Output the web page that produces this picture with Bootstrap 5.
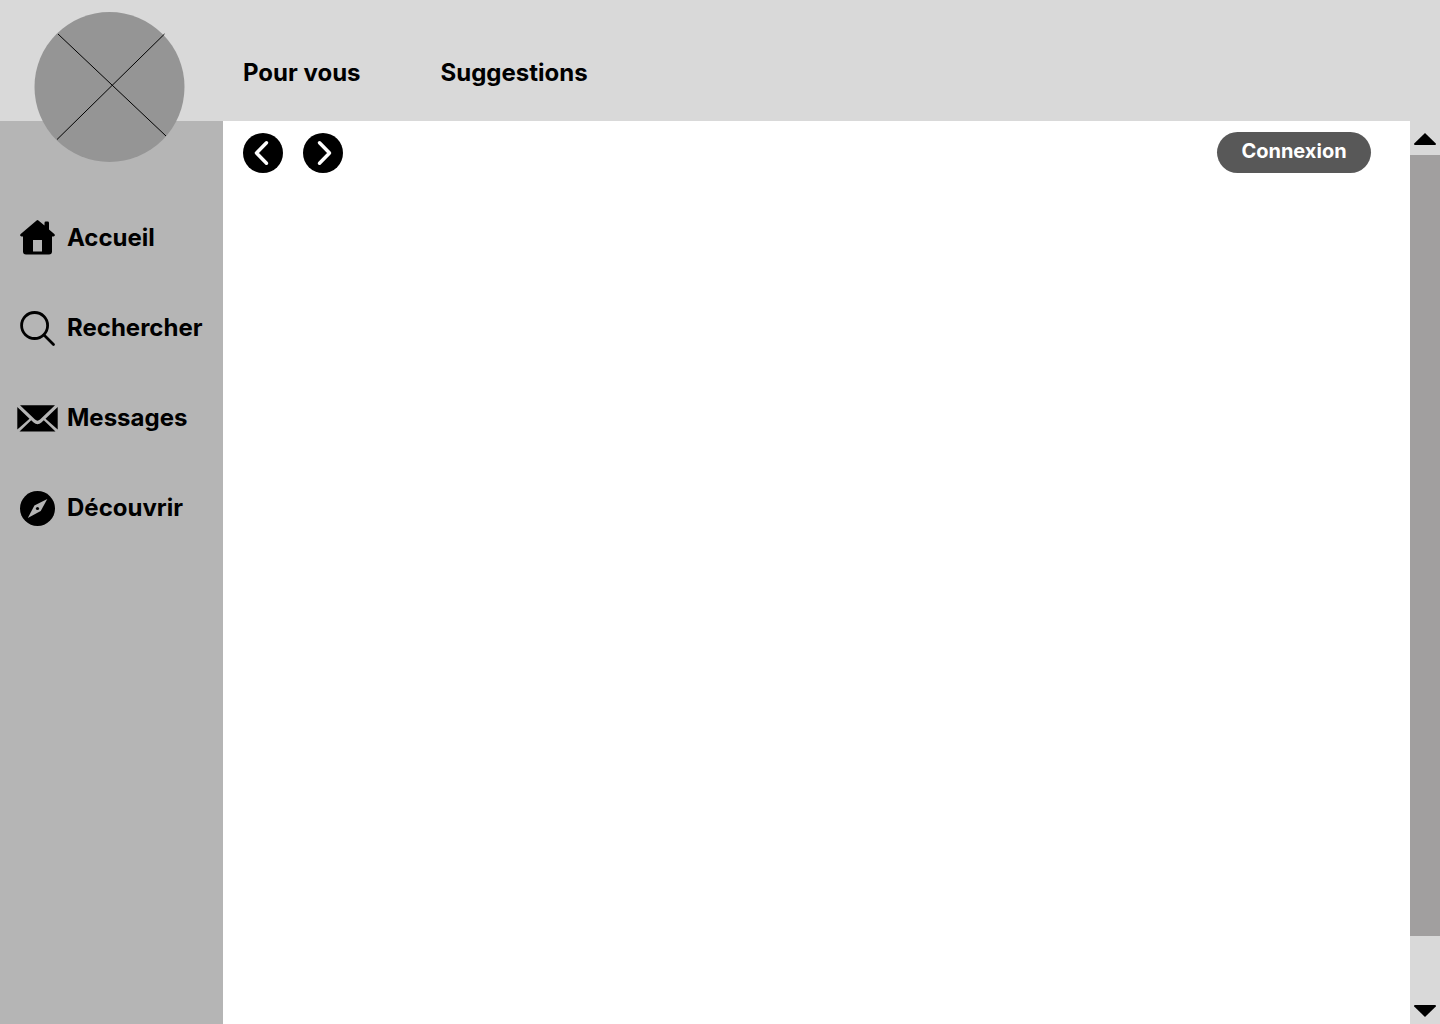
<!DOCTYPE html>
<html lang="fr">
<head>
<meta charset="utf-8">
<meta name="viewport" content="width=device-width, initial-scale=1">
<title>Accueil</title>
<link href="https://cdn.jsdelivr.net/npm/bootstrap@5.3.0/dist/css/bootstrap.min.css" rel="stylesheet">
<style>
  body { font-family: Inter, "Liberation Sans", sans-serif; color: #000; background: #fff; }
  a { color: #000; text-decoration: none; }
  svg { display: block; flex: none; }
  .top-bar { background: #d9d9d9; padding: 58px 0 33px 243px; }
  .top-links { gap: 80px; }
  .menu-text { font-size: 24px; line-height: 30px; font-weight: 700; }
  .logo { top: 12px; left: 34px; }
  .side-bar { width: 223px; background: #b5b5b5; padding-top: 97px; }
  .side-links { gap: 50px; }
  .side-links a { padding-left: 17px; gap: 9px; height: 40px; }
  .tool-row { padding: 11px 39px 0 20px; }
  .round-pair { gap: 20px; }
  .round-btn { width: 40px; height: 40px; }
  .login-btn { width: 154px; height: 41px; background: #585858; color: #fff; font-size: 20px; line-height: 24px; font-weight: 700; padding: 0 0 3px; }
  .login-btn:hover { background: #444; color: #fff; }
  .scroll-rail { width: 30px; background: #d9d9d9; }
  .rail-up { padding: 12px 4px 10px; }
  .rail-down { padding: 69px 4px 7px; }
  .rail-thumb { background: #a19f9f; }
</style>
<script src="https://cdn.jsdelivr.net/npm/bootstrap@5.3.0/dist/js/bootstrap.bundle.min.js" defer></script>
</head>
<body>
<div class="d-flex flex-column min-vh-100 position-relative">
  <header class="top-bar">
    <a href="#" class="logo position-absolute" aria-label="Logo">
      <svg width="152" height="150" viewBox="34 12 152 150">
        <circle cx="109.500" cy="87" r="75" fill="#959595"/>
        <path d="M58 34L166 136M164.500 34L57 139.500" stroke="#000" stroke-width="1"/>
      </svg>
    </a>
    <nav class="top-links d-flex menu-text" aria-label="Rubriques">
      <a href="#">Pour vous</a>
      <a href="#">Suggestions</a>
    </nav>
  </header>

  <div class="d-flex flex-grow-1">
    <aside class="side-bar flex-shrink-0">
      <nav class="side-links d-flex flex-column menu-text" aria-label="Menu principal">
        <a href="#" class="d-flex align-items-center">
          <svg width="41" height="40" viewBox="0 0 41 40">
            <path d="M19.600 2.400Q20.500 1.600 21.400 2.400L27.500 7.600V5Q27.500 3.600 28.800 3.600H30.700Q32 3.600 32 5V11.500L37.300 16.100Q38.800 18 36.500 18.500H35V33.500Q35 36.500 32 36.500H9Q6 36.500 6 33.500V18.500H4.500Q2.200 18 3.700 16.100Z"/>
            <path d="M16 22H25V33.500H16Z" fill="#b5b5b5"/>
          </svg>
          <span>Accueil</span>
        </a>
        <a href="#" class="d-flex align-items-center">
          <svg width="41" height="40" viewBox="0 0 41 40" fill="none" stroke="#000" stroke-width="2.800" stroke-linecap="round">
            <circle cx="17.600" cy="17.500" r="13"/>
            <path d="M27 27L36.500 36.500"/>
          </svg>
          <span>Rechercher</span>
        </a>
        <a href="#" class="d-flex align-items-center">
          <svg width="41" height="40" viewBox="0 0 41 40">
            <path d="M3 7.200H38L23 21.600Q20.500 23.800 18 21.600ZM.3 9L12.500 20.700L.3 31.500ZM40.700 9V31.500L28.500 20.700ZM14.200 22.300L16.600 24.600Q20.500 28 24.400 24.600L26.800 22.300L38.500 33.500H2.500Z"/>
          </svg>
          <span>Messages</span>
        </a>
        <a href="#" class="d-flex align-items-center">
          <svg width="41" height="40" viewBox="0 0 41 40">
            <circle cx="20.500" cy="20.500" r="17.500"/>
            <path d="M30.300 11L23.700 23L10.800 30L17.400 17.500Z" fill="#b5b5b5"/>
            <circle cx="20.500" cy="20.500" r="1.600"/>
          </svg>
          <span>Découvrir</span>
        </a>
      </nav>
    </aside>

    <main class="flex-grow-1">
      <div class="tool-row d-flex justify-content-between align-items-center">
        <div class="round-pair d-flex">
          <button type="button" class="round-btn btn btn-link border-0 p-0" aria-label="Précédent">
            <svg width="40" height="40" viewBox="0 0 40 40"><circle cx="20" cy="20" r="20"/><path d="M23.500 9.800L13.500 20L23.500 30.200" fill="none" stroke="#fff" stroke-width="3.500" stroke-linecap="round" stroke-linejoin="round"/></svg>
          </button>
          <button type="button" class="round-btn btn btn-link border-0 p-0" aria-label="Suivant">
            <svg width="40" height="40" viewBox="0 0 40 40"><circle cx="20" cy="20" r="20"/><path d="M16.500 9.800L26.500 20L16.500 30.200" fill="none" stroke="#fff" stroke-width="3.500" stroke-linecap="round" stroke-linejoin="round"/></svg>
          </button>
        </div>
        <button type="button" class="login-btn btn border-0 rounded-pill">Connexion</button>
      </div>
    </main>

    <div class="scroll-rail d-flex flex-column flex-shrink-0">
      <button type="button" class="rail-up bg-transparent border-0" aria-label="Défiler vers le haut">
        <svg width="22" height="12" viewBox="0 0 22 12"><path d="M11 0L21.800 10.600Q22.300 12 21 12H1Q-.3 12 .2 10.600Z"/></svg>
      </button>
      <div class="rail-thumb flex-grow-1"></div>
      <button type="button" class="rail-down bg-transparent border-0" aria-label="Défiler vers le bas">
        <svg width="22" height="12" viewBox="0 0 22 12"><path d="M11 12L21.800 1.400Q22.300 0 21 0H1Q-.3 0 .2 1.400Z"/></svg>
      </button>
    </div>
  </div>
</div>
</body>
</html>
